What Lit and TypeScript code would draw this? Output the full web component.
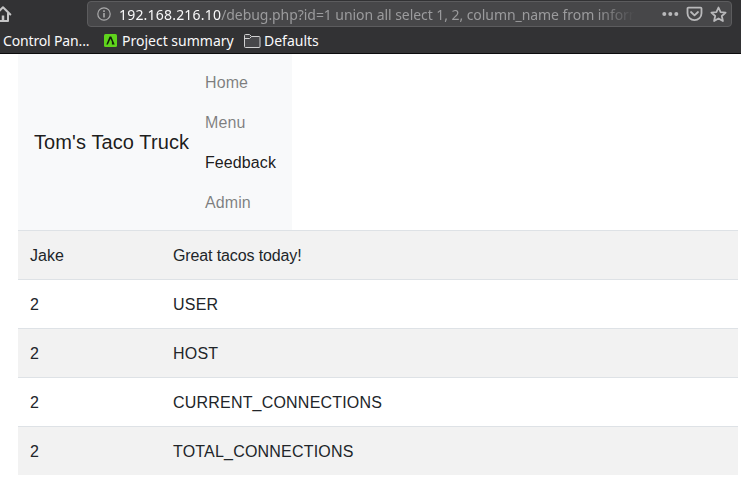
import { LitElement, html, css } from "lit";
import { customElement } from "lit/decorators.js";
import { classMap } from "lit/directives/class-map.js";

@customElement("browser-chrome")
class BrowserChrome extends LitElement {
  static styles = css`
    :host { display: block; height: 53px; background: #323234; border-bottom: 1px solid #0c0c0d; overflow: hidden;
      font-family: "Noto Sans", sans-serif; font-size: 14px; color: #f9f9fa; white-space: nowrap; }
    svg { display: block; flex: none; }
    .toolbar { display: flex; height: 28px; align-items: flex-start; }
    .home { margin: 5px 0 0 -5px; width: 17px; }
    .address { box-sizing: border-box; display: flex; align-items: center; width: 645px; height: 26px; margin: 1px 0 0 75px;
      padding: 0 4px 0 9px; background: #474749; border: 1px solid #5c5c5e; border-radius: 4px; }
    .url { width: 515px; margin-left: 8px; padding-top: 1px; line-height: 23px; color: #9b9b9d;
      -webkit-mask-image: linear-gradient(to right, #000 478px, transparent 516px); mask-image: linear-gradient(to right, #000 478px, transparent 516px); }
    .domain { color: #f9f9fa; letter-spacing: 0.2px; }
    .path { letter-spacing: -0.06px; }
    .actions { display: flex; align-items: center; gap: 7px; margin-left: auto; }
    .bookmarks { display: flex; height: 25px; align-items: center; line-height: 25px; }
    .bookmarks span { flex: none; }
    .control { width: 87px; margin-left: 3px; letter-spacing: -0.15px; }
    .summary { width: 113px; margin: 0 9px 0 5px; }
    .defaults { margin-left: 3px; }
    .mark { margin-left: 14px; }
  `;
  render() {
    return html`
      <div class="toolbar">
        <svg class="home" width="17" height="18" viewBox="0 0 17 18" fill="none" stroke="#c4c4c5" stroke-width="2">
          <path d="M0.8 9.5 8 2.2l7.3 7.3M3 8.5V16h10V8.5" stroke-linecap="round" stroke-linejoin="round" />
          <path d="M8 16v-5.5" stroke-width="2.5" />
        </svg>
        <div class="address">
          <svg width="14" height="14" viewBox="0 0 14 14">
            <circle cx="7" cy="7" r="6.2" fill="none" stroke="#aaaaab" stroke-width="1.2" />
            <path d="M7 6v4.6M7 3.3v1.6" stroke="#aaaaab" stroke-width="1.6" />
          </svg>
          <div class="url"><span class="domain">192.168.216.10</span><span class="path">/debug.php?id=1 union all select 1, 2, column_name from inform</span></div>
          <div class="actions">
            <svg width="17" height="4" viewBox="0 0 17 4" fill="#b9b9bb">
              <circle cx="2.3" cy="2" r="2" /><circle cx="8.3" cy="2" r="2" /><circle cx="14.3" cy="2" r="2" />
            </svg>
            <svg width="17" height="16" viewBox="0 0 17 16" fill="none" stroke="#b9b9bb" stroke-width="1.8" stroke-linecap="round" stroke-linejoin="round">
              <path d="M2.4 1.7h12.2c.5 0 .9.4.9.9v4.6a7 7 0 0 1-14 0V2.6c0-.5.4-.9.9-.9z" />
              <path d="m5 6 3.5 3.3L12 6" />
            </svg>
            <svg width="17" height="17" viewBox="0 0 17 17" fill="none" stroke="#b9b9bb" stroke-width="1.8" stroke-linejoin="round">
              <path d="m8.5 1.5 2.1 4.6 5 .5-3.8 3.4 1.1 5-4.4-2.6L4.1 15l1.1-5-3.8-3.4 5-.5z" />
            </svg>
          </div>
        </div>
      </div>
      <div class="bookmarks">
        <span class="control">Control Pan...</span>
        <svg class="mark" width="13" height="13" viewBox="0 0 13 13">
          <rect width="13" height="13" rx="1.5" fill="#5fd41c" />
          <path d="M2.3 10.5h1.6L6.5 4.7l1.4 3.1v2.7h2.8L7.3 2.5H5.6z" fill="#10210b" />
        </svg>
        <span class="summary">Project summary</span>
        <svg width="17" height="14" viewBox="0 0 17 14" fill="#47474a" stroke="#d0d0d1">
          <path d="M1.5 13.5a1 1 0 0 1-1-1v-11a1 1 0 0 1 1-1h4l2 2h7.5a1 1 0 0 1 1 1v9a1 1 0 0 1-1 1zM.5 4.5h5l2-2" />
        </svg>
        <span class="defaults">Defaults</span>
      </div>
    `;
  }
}

@customElement("app-root")
class AppRoot extends LitElement {
  static styles = css`
    :host { display: block; height: 489px; overflow: hidden; background: #fff; color: #212529;
      font: 16px/24px "Liberation Sans", Arial, sans-serif; }
    .content { width: 720px; margin-left: 18px; }
    .navbar { display: flex; align-items: center; width: 274px; height: 176px; box-sizing: border-box; padding: 8px 16px; background: #f8f9fa; }
    .brand { width: 155px; margin-right: 16px; font-size: 20px; line-height: 30px; letter-spacing: 0.1px; color: rgba(0, 0, 0, 0.9); white-space: nowrap; }
    .links { display: flex; flex-direction: column; }
    .link { padding: 9px 0 7px; letter-spacing: 0.1px; color: rgba(0, 0, 0, 0.5); }
    .active { color: rgba(0, 0, 0, 0.9); }
    .row { display: grid; grid-template-columns: 143px 1fr; border-top: 1px solid #dee2e6; }
    .row:nth-child(odd) { background: #f2f2f2; }
    .cell { padding: 13px 12px 11px; letter-spacing: -0.12px; }
    .cell:first-child { letter-spacing: 0; }
    .identifier { letter-spacing: 0.2px; }
  `;
  private links = ["Home", "Menu", "Feedback", "Admin"];
  private rows = [
    ["Jake", "Great tacos today!"],
    ["2", "USER"],
    ["2", "HOST"],
    ["2", "CURRENT_CONNECTIONS"],
    ["2", "TOTAL_CONNECTIONS"],
  ];
  render() {
    return html`
      <browser-chrome></browser-chrome>
      <main class="content">
        <nav class="navbar">
          <div class="brand">Tom's Taco Truck</div>
          <div class="links">
            ${this.links.map((l) => html`<div class=${classMap({ link: true, active: l === "Feedback" })}>${l}</div>`)}
          </div>
        </nav>
        <div class="table">
          ${this.rows.map((r) => html`<div class="row">${r.map((c) => html`<div class=${classMap({ cell: true, identifier: c === c.toUpperCase() })}>${c}</div>`)}</div>`)}
        </div>
      </main>
    `;
  }
}
